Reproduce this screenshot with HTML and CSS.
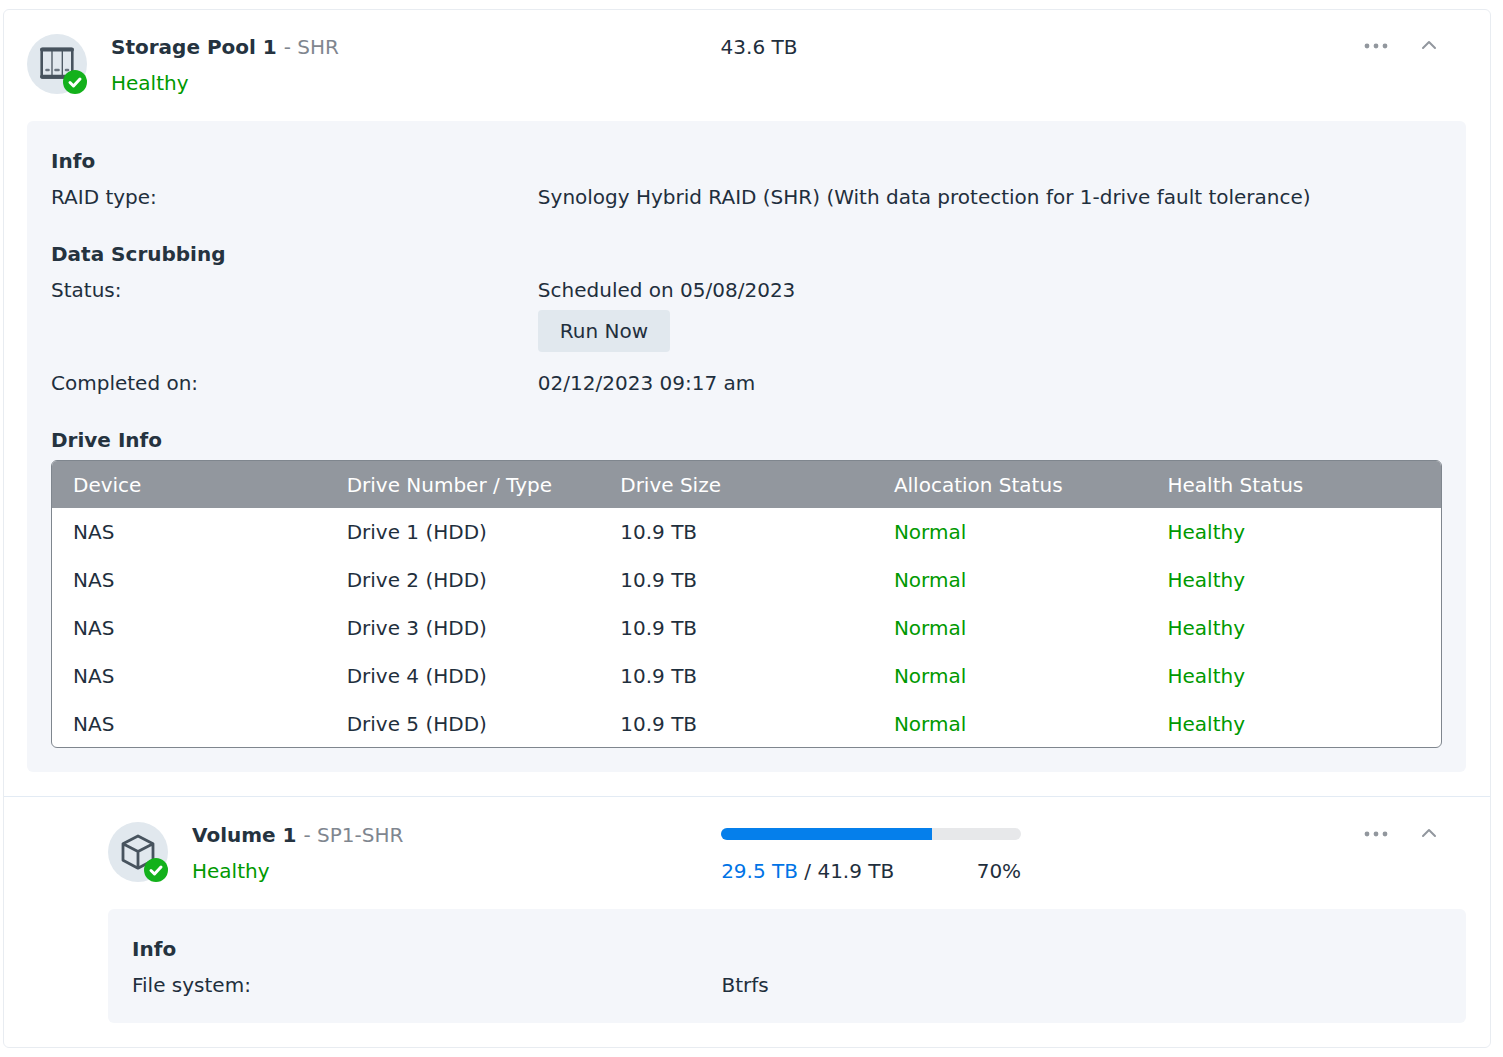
FILE: index.html
```html
<!DOCTYPE html>
<html lang="en">
<head>
    <meta charset="UTF-8" />
    <meta name="viewport" content="width=device-width, initial-scale=1.0" />
    <title>Storage Manager</title>
    <link rel="stylesheet" href="styles.css">
</head>
<body>
    <main class="card">
        <!-- Storage pool -->
        <section class="pool">
            <header class="header pool-header">
                <div class="identity">
                    <div class="icon">
                        <svg width="60" height="60" viewBox="0 0 60 60" aria-hidden="true">
                            <circle cx="30" cy="30" r="30" fill="#e1e8ee" />
                            <rect x="14.7" y="15" width="30.6" height="28.500" rx="1" fill="none" stroke="#47535e" stroke-width="2.600" />
                            <path d="M15 15.500h30M15 42.800h30" stroke="#47535e" stroke-width="4" stroke-linecap="round" />
                            <path d="M25 16v27M35.300 16v27" stroke="#47535e" stroke-width="1.300" />
                            <path d="M19.500 36h2M28.500 36h3M39 36h2" stroke="#6b7580" stroke-width="2.600" stroke-linecap="round" />
                            <circle cx="48" cy="48" r="12" fill="#13b11b" />
                            <path d="M43 48.500l3.500 3.500 6.500-7" fill="none" stroke="#fff" stroke-width="3" stroke-linecap="round" stroke-linejoin="round" />
                        </svg>
                    </div>
                    <div>
                        <h2>Storage Pool 1 <span class="sub">- SHR</span></h2>
                        <p class="healthy">Healthy</p>
                    </div>
                </div>
                <div class="size">43.6 TB</div>
                <div class="actions">
                    <button type="button" class="icon-btn" aria-label="More actions">
                        <svg width="24" height="24" viewBox="0 0 24 24"><g fill="#92979e"><circle cx="3" cy="12" r="2.400" /><circle cx="12" cy="12" r="2.400" /><circle cx="21" cy="12" r="2.400" /></g></svg>
                    </button>
                    <button type="button" class="icon-btn" aria-label="Collapse storage pool">
                        <svg width="24" height="24" viewBox="0 0 24 24"><path d="M6 14l6-6 6 6" fill="none" stroke="#92979e" stroke-width="2" stroke-linecap="round" stroke-linejoin="round" /></svg>
                    </button>
                </div>
            </header>

            <div class="panel pool-panel">
                <h3>Info</h3>
                <dl class="group">
                    <div class="row">
                        <dt>RAID type:</dt>
                        <dd>Synology Hybrid RAID (SHR) (With data protection for 1-drive fault tolerance)</dd>
                    </div>
                </dl>

                <h3>Data Scrubbing</h3>
                <dl class="group">
                    <div class="row">
                        <dt>Status:</dt>
                        <dd>Scheduled on 05/08/2023
                            <button type="button" class="run-btn">Run Now</button>
                        </dd>
                    </div>
                    <div class="row">
                        <dt>Completed on:</dt>
                        <dd>02/12/2023 09:17 am</dd>
                    </div>
                </dl>

                <h3>Drive Info</h3>
                <div class="table-box">
                    <table>
                        <thead>
                            <tr>
                                <th>Device</th>
                                <th>Drive Number / Type</th>
                                <th>Drive Size</th>
                                <th>Allocation Status</th>
                                <th class="last-col">Health Status</th>
                            </tr>
                        </thead>
                        <tbody>
                            <tr>
                                <td>NAS</td>
                                <td>Drive 1 (HDD)</td>
                                <td>10.9 TB</td>
                                <td class="healthy">Normal</td>
                                <td class="healthy">Healthy</td>
                            </tr>
                            <tr>
                                <td>NAS</td>
                                <td>Drive 2 (HDD)</td>
                                <td>10.9 TB</td>
                                <td class="healthy">Normal</td>
                                <td class="healthy">Healthy</td>
                            </tr>
                            <tr>
                                <td>NAS</td>
                                <td>Drive 3 (HDD)</td>
                                <td>10.9 TB</td>
                                <td class="healthy">Normal</td>
                                <td class="healthy">Healthy</td>
                            </tr>
                            <tr>
                                <td>NAS</td>
                                <td>Drive 4 (HDD)</td>
                                <td>10.9 TB</td>
                                <td class="healthy">Normal</td>
                                <td class="healthy">Healthy</td>
                            </tr>
                            <tr>
                                <td>NAS</td>
                                <td>Drive 5 (HDD)</td>
                                <td>10.9 TB</td>
                                <td class="healthy">Normal</td>
                                <td class="healthy">Healthy</td>
                            </tr>
                        </tbody>
                    </table>
                </div>
            </div>
        </section>

        <!-- Volume -->
        <section class="volume">
            <header class="header volume-header">
                <div class="identity">
                    <div class="icon">
                        <svg width="60" height="60" viewBox="0 0 60 60" aria-hidden="true">
                            <circle cx="30" cy="30" r="30" fill="#e1e8ee" />
                            <path d="M30 14l15 7.800v16.400L30 46.200l-15-8V21.800zM15 21.800L30 29.500l15-7.700M30 29.500v16.500" fill="none" stroke="#47535e" stroke-width="2.800" stroke-linejoin="round" />
                            <circle cx="48" cy="48" r="12" fill="#13b11b" />
                            <path d="M43 48.500l3.500 3.500 6.500-7" fill="none" stroke="#fff" stroke-width="3" stroke-linecap="round" stroke-linejoin="round" />
                        </svg>
                    </div>
                    <div>
                        <h2>Volume 1 <span class="sub">- SP1-SHR</span></h2>
                        <p class="healthy">Healthy</p>
                    </div>
                </div>
                <div class="usage">
                    <div class="bar" role="progressbar" aria-label="Used space" aria-valuenow="70" aria-valuemin="0" aria-valuemax="100">
                        <div class="bar-fill" style="width: 70.4%"></div>
                    </div>
                    <div class="usage-text">
                        <span><span class="used">29.5 TB</span> / 41.9 TB</span>
                        <span>70%</span>
                    </div>
                </div>
                <div class="actions">
                    <button type="button" class="icon-btn" aria-label="More actions">
                        <svg width="24" height="24" viewBox="0 0 24 24"><g fill="#92979e"><circle cx="3" cy="12" r="2.400" /><circle cx="12" cy="12" r="2.400" /><circle cx="21" cy="12" r="2.400" /></g></svg>
                    </button>
                    <button type="button" class="icon-btn" aria-label="Collapse volume">
                        <svg width="24" height="24" viewBox="0 0 24 24"><path d="M6 14l6-6 6 6" fill="none" stroke="#92979e" stroke-width="2" stroke-linecap="round" stroke-linejoin="round" /></svg>
                    </button>
                </div>
            </header>

            <div class="panel volume-panel">
                <h3>Info</h3>
                <dl>
                    <div class="row">
                        <dt>File system:</dt>
                        <dd>Btrfs</dd>
                    </div>
                </dl>
            </div>
        </section>
    </main>
</body>
</html>
```
FILE: styles.css
```css
* {
    box-sizing: border-box;
}
body {
    margin: 9px 12px 9px 3px;
    background-color: #fff;
    color: #1f2f3d;
    font-family: Verdana, "DejaVu Sans", sans-serif;
    font-size: 20px;
    line-height: 36px;
}
h2, h3, p, dl, dd {
    margin: 0;
}
h2, h3 {
    font-size: 20px;
    color: #25333f;
}
.card {
    border: 1px solid #e8ecf1;
    border-radius: 6px;
}
.pool {
    padding: 19px 24px 24px 23px;
}
.volume {
    padding: 20px 24px 24px 104px;
    border-top: 1px solid #e3ebf4;
}

/* Headers */
.header {
    display: grid;
    align-items: start;
    margin-bottom: 20px;
}
.pool-header {
    grid-template-columns: 48.2% 1fr auto;
}
.volume-header {
    grid-template-columns: 45.15% 1fr auto;
}
.identity {
    display: flex;
    gap: 24px;
}
.icon {
    width: 60px;
    height: 60px;
    margin-top: 5px;
}
.icon svg, .icon-btn svg {
    display: block;
}
.sub {
    font-weight: normal;
    color: #7f868f;
}
.healthy {
    color: #009900;
}
.actions {
    display: flex;
    gap: 17px;
    padding-right: 19px;
}
.icon-btn {
    display: flex;
    align-items: center;
    justify-content: center;
    width: 36px;
    height: 34px;
    padding: 0;
    border: none;
    background: none;
    cursor: pointer;
}

/* Usage bar */
.usage {
    max-width: 300px;
    padding-top: 11px;
}
.bar {
    height: 12px;
    margin-bottom: 13px;
    border-radius: 6px;
    background-color: #e7e8ea;
    overflow: hidden;
}
.bar-fill {
    height: 100%;
    background-color: #057feb;
}
.usage-text {
    display: flex;
    justify-content: space-between;
}
.used {
    color: #0073e6;
}

/* Detail panels */
.panel {
    padding: 22px 24px 20px;
    border-radius: 6px;
    background-color: #f4f6fa;
}
.group {
    margin-bottom: 21px;
}
.row {
    display: grid;
    grid-template-columns: 35% 1fr;
}
.volume-panel .row {
    grid-template-columns: 45% 1fr;
}
.run-btn {
    display: block;
    height: 42px;
    margin: 2px 0 13px;
    padding: 0 22px;
    border: none;
    border-radius: 4px;
    background-color: #e1e8ee;
    color: inherit;
    font: inherit;
    cursor: pointer;
}

/* Drive table */
.table-box {
    margin: 2px 0 4px;
    border: 1px solid #7f868e;
    border-radius: 6px;
    background-color: #fff;
    overflow: hidden;
}
table {
    width: 100%;
    table-layout: fixed;
    border-collapse: collapse;
}
th, td {
    height: 48px;
    padding: 0 21px;
    text-align: left;
}
th {
    width: 19.7%;
    height: 47px;
    background-color: #92979e;
    color: #fff;
    font-weight: normal;
}
.last-col {
    width: auto;
}
tbody tr:last-child td {
    height: 47px;
}
```
